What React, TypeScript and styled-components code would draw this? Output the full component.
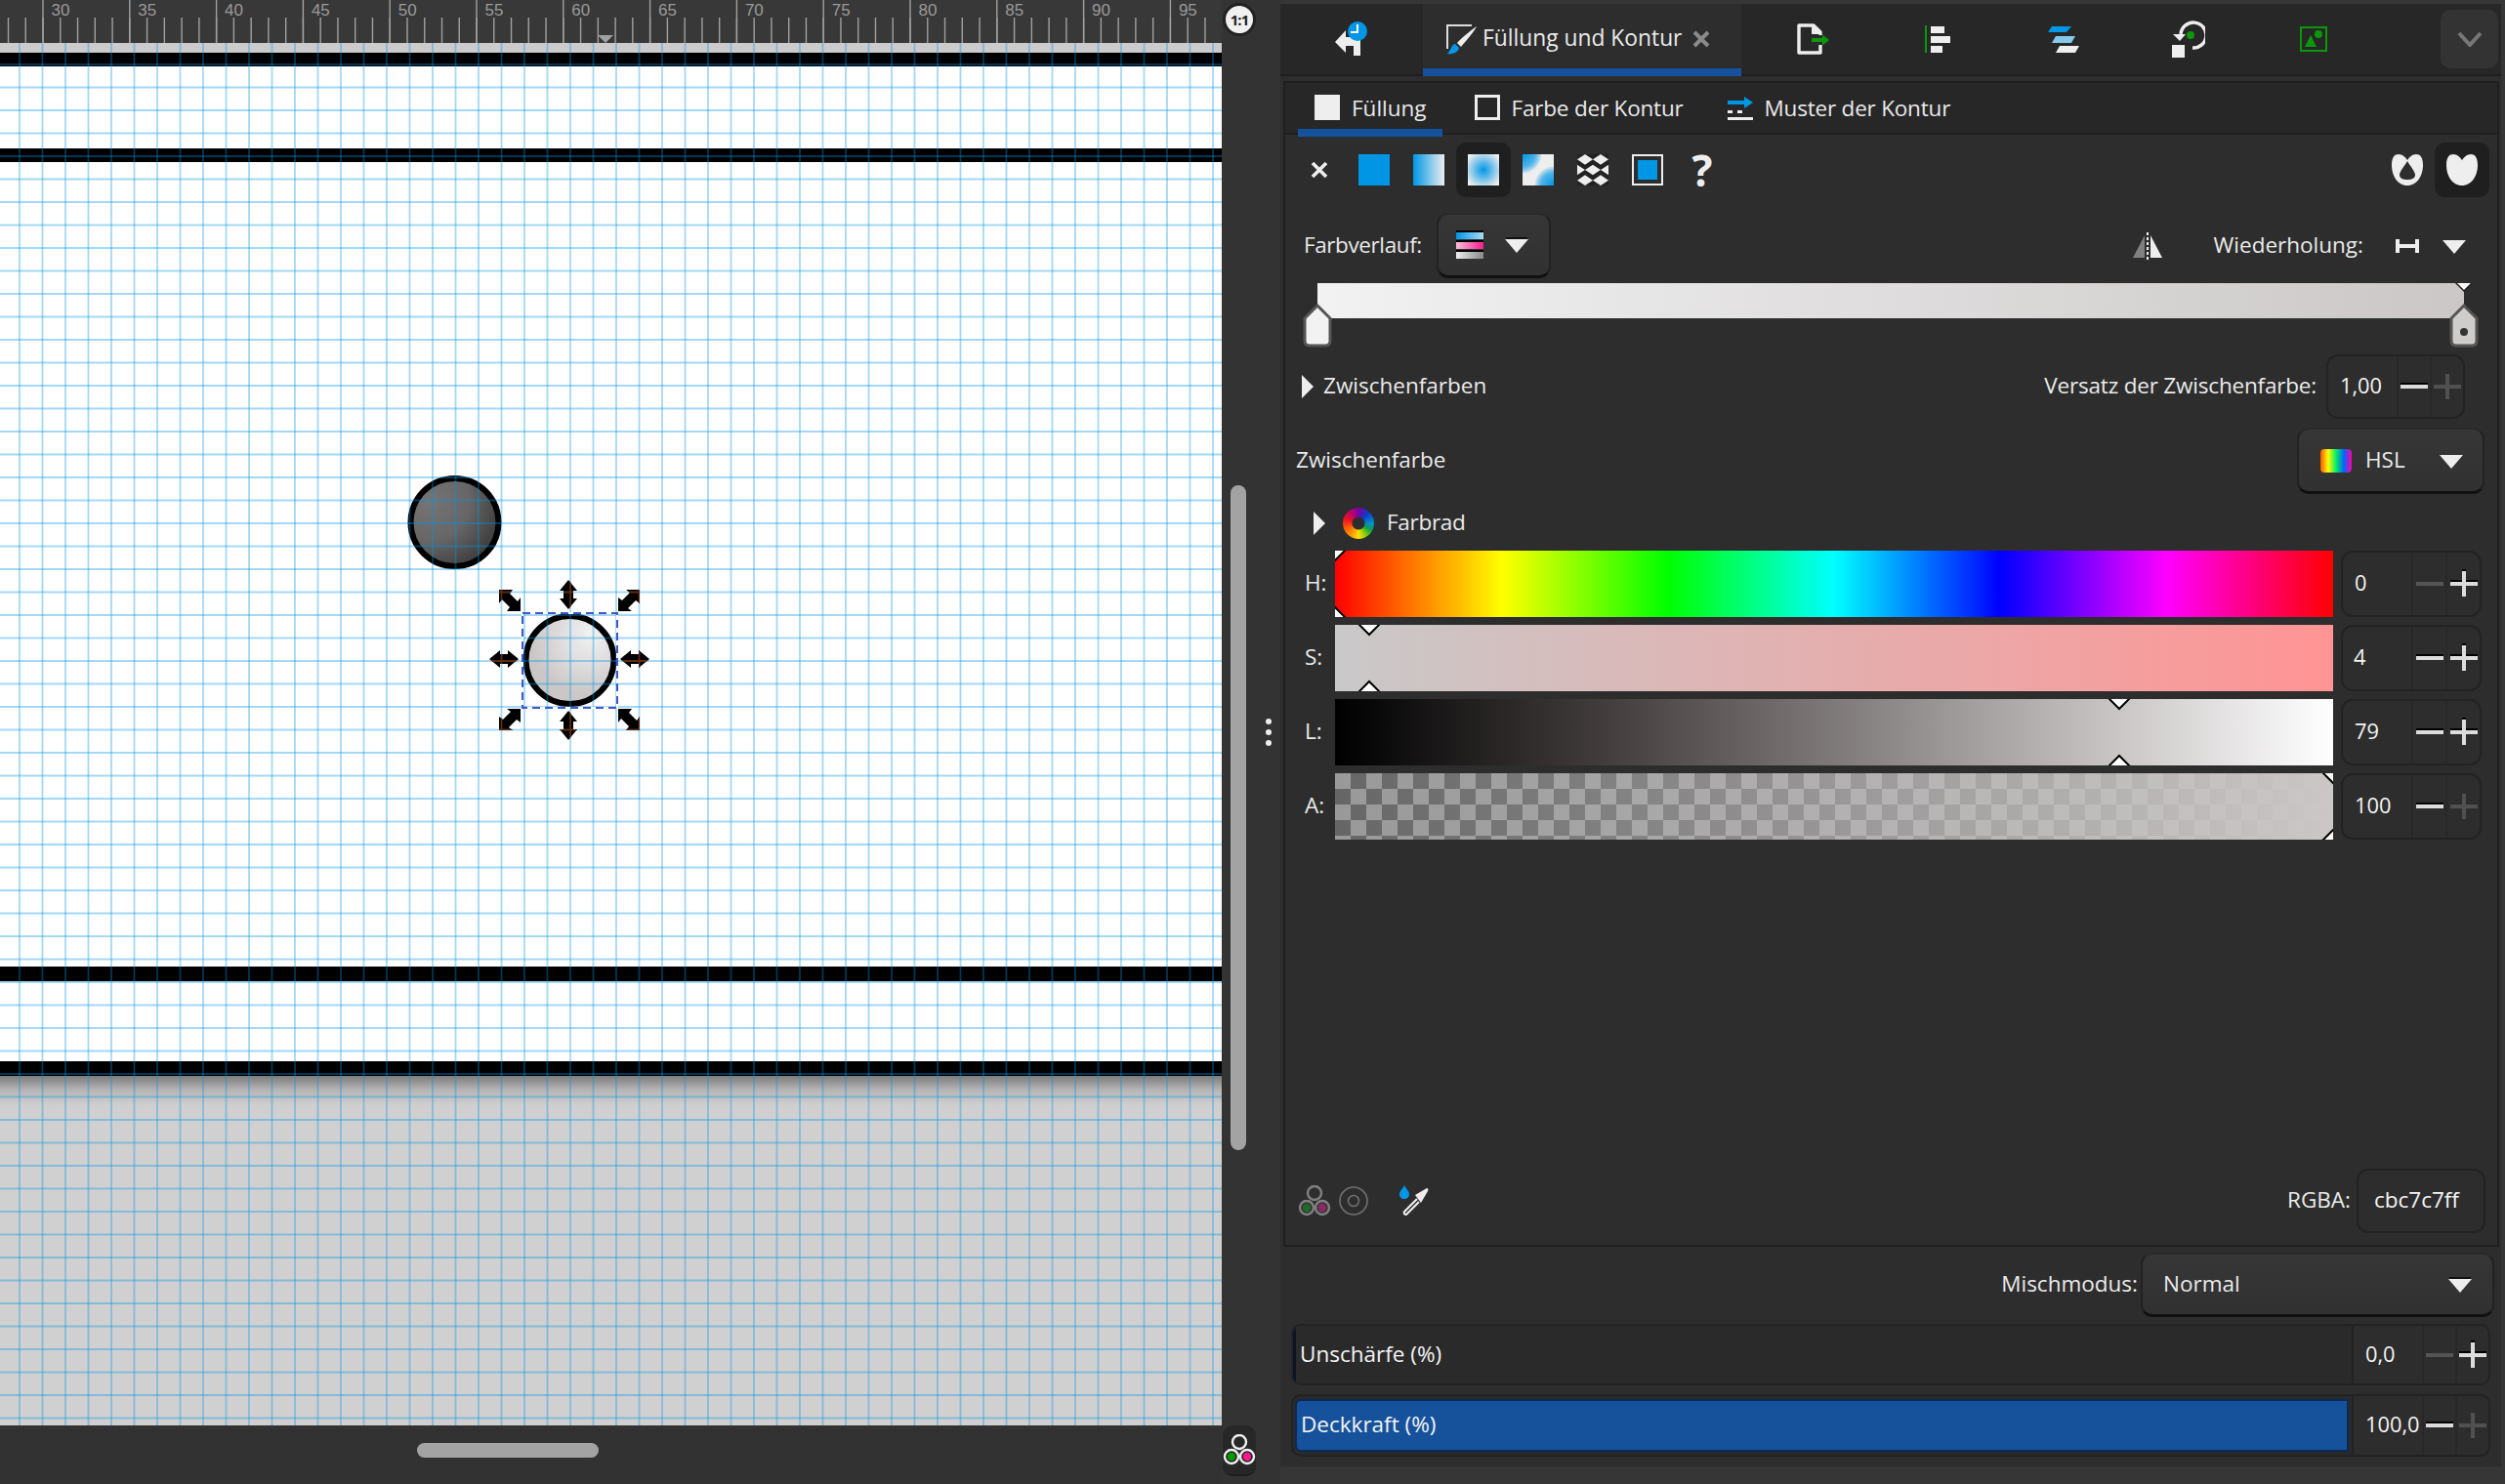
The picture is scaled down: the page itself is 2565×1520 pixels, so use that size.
import React from "react";
import styled, { createGlobalStyle } from "styled-components";

const Global = createGlobalStyle`
  html, body { margin: 0; padding: 0; background: #333; overflow: hidden; }
  * { box-sizing: border-box; }
  #root { width: 2565px; height: 1520px; }
`;

const Shell = styled.div`
  width: 2565px; height: 1520px; display: grid; grid-template-columns: 1251px 60px 1fr;
  font-family: "Open Sans", "Noto Sans", sans-serif; font-size: 22.5px; color: #eaeaea; overflow: hidden;
`;
const Txt = styled.span`padding-bottom: 3px; white-space: nowrap;`;
const CanvasColumn = styled.div`display: flex; flex-direction: column; height: 1520px;`;
const RulerBar = styled.svg`display: block; width: 1251px; height: 44px; background: #383838; flex: none;`;
const Canvas = styled.div`position: relative; height: 1416px; display: flex; flex-direction: column; background: #fff; overflow: hidden;`;
const Band = styled.div<{ $h: number; $c: string }>`height: ${(p) => p.$h}px; background: ${(p) => p.$c}; flex: none;`;
const Desk = styled.div`
  flex: 1; background: linear-gradient(#7c7c7c 0, #b4b4b4 14px, #cfcfcf 30px, #d0d0d0 40px);
`;
const Overlay = styled.svg`position: absolute; left: 0; top: 0; width: 1251px; height: 1416px;`;
const HBar = styled.div`flex: 1; background: #323232; padding: 18px 0 0 427px;`;
const HThumb = styled.div`width: 186px; height: 15px; border-radius: 8px; background: #a3a3a3;`;

const Gutter = styled.div`display: grid; grid-template-columns: 36px 24px; background: #333;`;
const ScrollCol = styled.div`display: flex; flex-direction: column; height: 1520px;`;
const ZoomFit = styled.div`
  height: 44px; flex: none; display: flex; align-items: center; justify-content: center;
`;
const ZoomFace = styled.div`
  width: 34px; height: 34px; margin-top: -4px; border-radius: 50%; background: #f0f0f0; color: #222; border: 3px solid #222;
  font-size: 15px; font-weight: 700; display: flex; align-items: center; justify-content: center; letter-spacing: -1px;
`;
const Track = styled.div`flex: 1; padding: 453px 0 0 9px;`;
const VThumb = styled.div`width: 16px; height: 681px; border-radius: 8px; background: #a3a3a3;`;
const CmsButton = styled.div`
  width: 34px; height: 52px; margin: 0 0 8px 1px; background: #272727; border-radius: 10px; display: flex; align-items: center; justify-content: center;
  border-bottom: 2px solid #1d1d1d;
`;
const SplitCol = styled.div`display: flex; flex-direction: column; align-items: center; justify-content: center; gap: 5px; height: 1499px;`;
const Dot = styled.span`width: 6px; height: 6px; border-radius: 50%; background: #eee;`;

const PanelColumn = styled.div`display: flex; flex-direction: column; background: #363636; padding: 4px 4px 18px 0;`;
const Panel = styled.div`flex: 1; background: #2d2d2d; display: flex; flex-direction: column;`;
const TabBar = styled.div`height: 74px; flex: none; display: flex; background: #272727; border-bottom: 2px solid #1f1f1f;`;
const IconTab = styled.div`width: 146px; height: 72px; display: flex; align-items: center; justify-content: center;`;
const SmallTab = styled.div<{ $first?: boolean }>`
  width: 128px; height: 72px; display: flex; align-items: center; justify-content: center; margin-left: ${(p) => (p.$first ? 10 : 0)}px;
`;
const ActiveTab = styled.div`
  width: 326px; height: 74px; display: flex; align-items: center; padding: 6px 0 0 24px; background: #2d2d2d; border-bottom: 8px solid #16529c;
`;
const TabText = styled.span`font-size: 22.8px; white-space: nowrap; margin: 0 11px 0 5px; padding-bottom: 4px;`;
const MoreButton = styled.div`
  margin: 6px 3px 0 auto; width: 59px; height: 60px; border-radius: 10px; background: #333; display: flex; align-items: center; justify-content: center;
`;
const Frame = styled.div`
  height: 1194px; margin: 5px 0 0 3px; width: 1245px; border: 2px solid #1f1f1f; display: flex; flex-direction: column; flex: none;
`;
const SubTabs = styled.div`height: 53px; flex: none; display: flex; align-items: flex-start; padding-left: 13px; gap: 16px; background: #272727; border-bottom: 2px solid #1f1f1f;`;
const SubTab = styled.div<{ $active?: boolean; $pr: number }>`
  height: 55px; display: flex; align-items: center; gap: 12px; padding: 3px ${(p) => p.$pr}px 0 17px; white-space: nowrap; letter-spacing: ${(p) => (p.$active ? 0 : -0.2)}px;
  border-bottom: 8px solid ${(p) => (p.$active ? "#16529c" : "transparent")};
`;
const PaintRow = styled.div`display: flex; padding: 8px 8px 0 7px; height: 64px; flex: none;`;
const PaintButton = styled.div<{ $active?: boolean }>`
  width: 56px; height: 56px; border-radius: 10px; display: flex; align-items: center; justify-content: center; background: ${(p) => (p.$active ? "#1f1f1f" : "transparent")};
`;
const Spacer = styled.div`flex: 1;`;
const Question = styled.span`font-size: 44px; font-weight: 700; line-height: 1; color: #eee;`;
const GradRow = styled.div`display: flex; align-items: center; margin-top: 16px; height: 67px; padding: 0 32px 0 19px; flex: none;`;
const GradLabel = styled(Txt)`width: 136px; letter-spacing: -0.4px;`;
const DropButton = styled.div<{ $w: number; $pad: number; $arrowPad?: number }>`
  width: ${(p) => p.$w}px; height: 66px; padding: 0 ${(p) => p.$arrowPad ?? 21}px 0 ${(p) => p.$pad}px; display: flex; align-items: center; background: linear-gradient(#363636, #313131);
  border: 2px solid #222; border-top-color: #2a2a2a; border-bottom: 3px solid #111; border-radius: 12px; flex: none;
`;
const GradPicker = styled(DropButton)`height: 67px;`;
const HslButton = styled(DropButton)`height: 68px;`;
const ReverseWrap = styled.div`display: flex; margin-right: 52px;`;
const RepeatWrap = styled.div`display: flex; margin-left: 33px; gap: 24px; align-items: center;`;
const BarWrap = styled.div`position: relative; margin: 5px 0 0 33px; width: 1174px; height: 66px; flex: none;`;
const GradBar = styled.div`height: 36px; background: linear-gradient(90deg, #f2f2f2, #cbc7c7);`;
const StopHandle = styled.svg<{ $end?: boolean }>`position: absolute; top: 21px; ${(p) => (p.$end ? "right: -16px;" : "left: -16px;")} width: 32px; height: 45px;`;
const EndMark = styled.svg`position: absolute; top: 0; right: -10px; width: 20px; height: 9px;`;
const StopRow = styled.div`display: flex; align-items: center; margin-top: 7px; height: 66px; padding: 0 33px 0 17px; flex: none;`;
const Expander = styled.svg`flex: none; width: 12px; height: 24px;`;
const ExpanderLabel = styled(Txt)`margin-left: 10px;`;
const HslLabel = styled(Txt)`margin-left: 14px;`;
const OffsetLabel = styled(Txt)`margin-right: 10px; letter-spacing: -0.19px;`;
const ColorHead = styled.div`display: flex; align-items: center; margin-top: 9px; height: 68px; padding: 0 13px 0 11px; flex: none;`;
const WheelRow = styled.div`display: flex; align-items: center; height: 58px; padding: 2px 0 0 29px; flex: none;`;
const WheelLabel = styled(Txt)`letter-spacing: -0.3px;`;
const Wheel = styled.div`
  width: 32px; height: 32px; border-radius: 50%; margin: 0 13px 0 18px;
  background: radial-gradient(circle, #2d2d2d 0 6px, transparent 7px),
    conic-gradient(#7a00a8, #0a3cc8 12%, #0090c8 25%, #12a050 33%, #90d000 42%, #ffe000 50%, #ffa000 58%, #ff6a00 67%, #f01020 80%, #b00070 92%, #7a00a8);
`;
const SliderGrid = styled.div`display: grid; grid-template-columns: 51px 1022px 144px; row-gap: 8px; flex: none;`;
const ChannelLabel = styled.div`height: 68px; display: flex; align-items: center; padding: 0 0 3px 20px;`;
const Slider = styled.div<{ $bg: string }>`position: relative; height: 68px; overflow: hidden; background: ${(p) => p.$bg};`;
const SliderThumbs = styled.svg`position: absolute; top: 0; width: 24px; height: 68px; margin-left: -12px;`;
const SpinSlot = styled.div`margin-left: 8px;`;
const SpinBox = styled.div<{ $w: number; $h: number; $btn: number }>`
  width: ${(p) => p.$w}px; height: ${(p) => p.$h}px; display: grid; grid-template-columns: 1fr ${(p) => p.$btn}px ${(p) => p.$btn}px;
  border: 2px solid #232323; border-radius: 12px; background: #2d2d2d;
`;
const SpinValue = styled.div<{ $pad: number }>`display: flex; align-items: center; padding: 0 0 3px ${(p) => p.$pad}px; color: #f4f4f4; font-size: 21.8px;`;
const SpinBtn = styled.div`display: flex; align-items: center; justify-content: center; border-left: 2px solid #282828;`;
const Footer = styled.div`margin-top: auto; margin-bottom: 12px; height: 66px; display: flex; align-items: center; padding: 0 12px 0 13px; flex: none;`;
const FooterGap = styled.div<{ $w: number }>`width: ${(p) => p.$w}px; flex: none;`;
const HexLabel = styled(Txt)`margin-right: 6px;`;
const HexBox = styled.div`
  width: 132px; height: 66px; display: flex; align-items: center; padding: 0 0 3px 16px; border: 2px solid #232323; border-radius: 12px; color: #f4f4f4; white-space: nowrap;
`;
const MixRow = styled.div`display: flex; justify-content: flex-end; align-items: center; margin: 6px 7px 0 0; height: 66px; flex: none;`;
const MixLabel = styled(Txt)`margin-right: 3px;`;
const MixSelect = styled(DropButton)`justify-content: space-between;`;
const EffectRow = styled.div<{ $h: number; $gap: number }>`
  margin: ${(p) => p.$gap}px 11px 0; height: ${(p) => p.$h}px; display: flex; border: 2px solid #232323; border-radius: 10px; background: #2a2a2a; flex: none; overflow: hidden;
`;
const EffectTrack = styled.div<{ $fill: boolean }>`
  width: ${(p) => (p.$fill ? 1079 : 1084)}px; flex: none; margin: ${(p) => (p.$fill ? "3px 3px 3px 2px" : "0")}; display: flex; align-items: center; color: #f4f4f4;
  padding: 0 0 3px ${(p) => (p.$fill ? 4 : 7)}px; border: ${(p) => (p.$fill ? "2px solid #0b2a56" : "0")}; border-radius: ${(p) => (p.$fill ? "6px 0 0 6px" : "0")};
  background: ${(p) => (p.$fill ? "#16529c" : "linear-gradient(90deg, #0a1626 3px, #2a2a2a 3px)")};
`;
const EffectSpin = styled.div`flex: 1; display: grid; grid-template-columns: 1fr 34px 34px; background: #2d2d2d; border-left: 2px solid #222;`;

const majors = Array.from({ length: 14 }, (_, i) => i);
const minors = Array.from({ length: 70 }, (_, i) => i);

function Ruler() {
  return (
    <RulerBar viewBox="0 0 1251 44">
      {minors.map((i) => {
        const x = 8.5 + i * 17.76;
        return <line key={i} x1={x} x2={x} y1={18} y2={44} stroke="#a0a0a0" strokeWidth={1.4} />;
      })}
      {majors.map((i) => {
        const x = 44 + i * 88.8;
        return (
          <g key={i}>
            <line x1={x} x2={x} y1={0} y2={44} stroke="#a0a0a0" strokeWidth={1.4} />
            <text x={x + 8.5} y={16} fontSize={17} fill="#9a9a9a" fontFamily="Liberation Sans, sans-serif">{30 + i * 5}</text>
          </g>
        );
      })}
      <polygon points="612,36 628,36 620,44" fill="#a0a0a0" />
    </RulerBar>
  );
}

const vLines = Array.from({ length: 53 }, (_, i) => 20 + i * 23.5);
const hLines = Array.from({ length: 60 }, (_, i) => 22 + i * 23.5);

function Grid({ stroke, op }: { stroke: string; op: number }) {
  return (
    <g stroke={stroke} strokeOpacity={op} strokeWidth={1.8}>
      {vLines.map((x) => <line key={x} x1={x} x2={x} y1={0} y2={1416} />)}
      {hLines.map((y) => <line key={y} x1={0} x2={1251} y1={y} y2={y} />)}
    </g>
  );
}

const VA = "M0-15L9-4H5V4H9L0 15-9 4H-5V-4H-9Z";
const HA = "M-15 0L-4-9V-5H4V-9L15 0 4 9V5H-4V9Z";
const DA = "M-11-11H3L0-7 8 1 11-3V11H-3L0 7-8-1-11 3Z";
const handles = [
  { d: VA, t: "translate(582 565)" },
  { d: VA, t: "translate(582 699)" },
  { d: HA, t: "translate(516 631)" },
  { d: HA, t: "translate(650 631)" },
  { d: DA, t: "translate(522 571)" },
  { d: DA, t: "translate(644 571) rotate(90)" },
  { d: DA, t: "translate(522 693) rotate(90)" },
  { d: DA, t: "translate(644 693)" },
];

function CanvasArt() {
  return (
    <Overlay viewBox="0 0 1251 1416">
      <defs>
        <radialGradient id="darkBall" gradientUnits="userSpaceOnUse" cx="440" cy="470" r="90">
          <stop offset="0" stopColor="#757575" />
          <stop offset="0.45" stopColor="#666" />
          <stop offset="1" stopColor="#2c2c2c" />
        </radialGradient>
        <radialGradient id="lightBall" gradientUnits="userSpaceOnUse" cx="605" cy="606" r="62">
          <stop offset="0" stopColor="#f2f2f2" />
          <stop offset="1" stopColor="#cbc7c7" />
        </radialGradient>
        <clipPath id="handleClip">
          {handles.map((h) => <path key={h.t} d={h.d} transform={h.t} />)}
        </clipPath>
      </defs>
      <circle cx="465.5" cy="491" r="45" fill="url(#darkBall)" stroke="#000" strokeWidth="6" />
      <circle cx="583.5" cy="632" r="45" fill="url(#lightBall)" stroke="#000" strokeWidth="6" />
      <Grid stroke="#0096e6" op={0.36} />
      <rect x="535" y="584" width="97" height="97" fill="none" stroke="#fff" strokeWidth="2" />
      <rect x="535" y="584" width="97" height="97" fill="none" stroke="#4456cc" strokeWidth="2" strokeDasharray="8 5" />
      {handles.map((h) => <path key={h.t} d={h.d} transform={h.t} fill="#000" />)}
      <g clipPath="url(#handleClip)"><Grid stroke="#5e2a12" op={1} /></g>
    </Overlay>
  );
}

function Down({ edge = true }: { edge?: boolean }) {
  return (
    <svg width="24" height="16" viewBox="0 0 24 16">
      {edge && <rect x="1" y="0" width="22" height="2" fill="#111" />}
      <polygon points="0,2 24,2 12,16" fill="#eee" />
    </svg>
  );
}
function Right() {
  return (
    <Expander viewBox="0 0 12 24">
      <polygon points="0,0 12,12 0,24" fill="#eee" />
    </Expander>
  );
}
function Minus({ dim }: { dim?: boolean }) {
  return (
    <svg width="28" height="28" viewBox="0 0 28 28">
      {!dim && <rect x="0" y="10" width="28" height="2" fill="#000" />}
      <rect x="0" y="12" width="28" height="4" fill={dim ? "#555" : "#dcdcdc"} />
    </svg>
  );
}
function Plus({ dim }: { dim?: boolean }) {
  return (
    <svg width="28" height="30" viewBox="0 0 28 30">
      {!dim && <><rect x="12" y="0" width="4" height="2" fill="#000" /><rect x="0" y="11" width="28" height="2" fill="#000" /></>}
      <path d="M12 2h4v11h12v4H16v11h-4V17H0v-4h12z" fill={dim ? "#505050" : "#dcdcdc"} />
    </svg>
  );
}
function Spin({ v, pad, w, h, btn, dimMinus, dimPlus }: { v: string; pad: number; w: number; h: number; btn: number; dimMinus?: boolean; dimPlus?: boolean }) {
  return (
    <SpinBox $w={w} $h={h} $btn={btn}>
      <SpinValue $pad={pad}>{v}</SpinValue>
      <SpinBtn><Minus dim={dimMinus} /></SpinBtn>
      <SpinBtn><Plus dim={dimPlus} /></SpinBtn>
    </SpinBox>
  );
}

function Cms({ dim }: { dim?: boolean }) {
  const s = dim ? "#808080" : "#eee";
  return (
    <svg width="34" height="32" viewBox="0 0 34 32">
      <circle cx="17" cy="8" r="7" fill="none" stroke={s} strokeWidth="2.4" />
      <circle cx="9" cy="23" r="7" fill={dim ? "#333" : "#222"} stroke={s} strokeWidth="2.4" />
      <circle cx="25" cy="23" r="7" fill={dim ? "#333" : "#222"} stroke={s} strokeWidth="2.4" />
      <circle cx="9" cy="23" r="4.2" fill={dim ? "#1f6a2a" : "#009a00"} />
      <circle cx="25" cy="23" r="4.2" fill={dim ? "#8a2a64" : "#ff1a90"} />
    </svg>
  );
}

function HistoryIcon() {
  return (
    <svg width="34" height="38" viewBox="0 0 34 38">
      <path d="M0 22L11 10V17H26V36H19V26H11V33Z" fill="#eee" />
      <circle cx="23" cy="11" r="10" fill="#0096e6" />
      <path d="M23 4v8h-7" fill="none" stroke="#fff" strokeWidth="2" />
    </svg>
  );
}
function BrushIcon() {
  return (
    <svg width="32" height="32" viewBox="0 0 32 32">
      <path d="M1 26V2H26" fill="none" stroke="#ddd" strokeWidth="2" />
      <path d="M31 3C27 6 16 14 11 20l4 4C20 18 28 9 31 3Z" fill="#eee" />
      <path d="M9 21c-4 1-4 5-5 6-1 2-3 3-3 4 5 1 11-1 12-6z" fill="#0096e6" />
    </svg>
  );
}
function ExportIcon() {
  return (
    <svg width="34" height="32" viewBox="0 0 34 32">
      <path d="M2 2H17L24 9V30H2Z" fill="none" stroke="#eee" strokeWidth="3.4" strokeLinejoin="round" />
      <path d="M16 2V10H24" fill="#eee" stroke="#eee" strokeWidth="2" />
      <rect x="14" y="12" width="20" height="10" fill="#2a2a2a" />
      <path d="M15 15H26V11.5L33 17 26 22.5V19H15Z" fill="#0a980a" />
    </svg>
  );
}
function AlignIcon() {
  return (
    <svg width="28" height="28" viewBox="0 0 28 28">
      <rect x="0" y="0" width="2" height="28" fill="#0a980a" />
      <rect x="6" y="1" width="14" height="7" fill="#eee" />
      <rect x="6" y="11" width="20" height="7" fill="#eee" />
      <rect x="6" y="21" width="12" height="7" fill="#eee" />
    </svg>
  );
}
function LayersIcon() {
  return (
    <svg width="32" height="28" viewBox="0 0 32 28">
      <polygon points="4,1 24,1 19,7 0,7" fill="#0096e6" />
      <polygon points="8,11 28,11 24,18 4,18" fill="#84c8ec" />
      <polygon points="12,21 32,21 28,28 8,28" fill="#eee" />
    </svg>
  );
}
function TransformIcon() {
  return (
    <svg width="34" height="38" viewBox="0 0 34 38">
      <path d="M9 14A13 13 0 1 1 21 28" fill="none" stroke="#eee" strokeWidth="3.4" />
      <polygon points="1,14 14,14 8,21" fill="#eee" />
      <circle cx="19" cy="15" r="4" fill="#0a980a" />
      <rect x="0" y="25" width="13" height="13" fill="#eee" />
    </svg>
  );
}
function ImageIcon() {
  return (
    <svg width="28" height="26" viewBox="0 0 28 26">
      <rect x="1" y="1" width="26" height="24" fill="none" stroke="#0a980a" strokeWidth="2" />
      <polygon points="5,21 17,21 11,9" fill="#0a980a" />
      <circle cx="19" cy="8" r="4" fill="#0a980a" />
    </svg>
  );
}
function Flat() {
  return <svg width="32" height="32"><rect width="32" height="32" fill="#0096e6" /></svg>;
}
function Linear() {
  return (
    <svg width="32" height="32">
      <defs><linearGradient id="pl"><stop offset="0" stopColor="#0096e6" /><stop offset="1" stopColor="#eee" /></linearGradient></defs>
      <rect width="32" height="32" fill="url(#pl)" />
    </svg>
  );
}
function Radial() {
  return (
    <svg width="32" height="32">
      <defs><radialGradient id="pr" r="0.62"><stop offset="0" stopColor="#0096e6" /><stop offset="1" stopColor="#eee" /></radialGradient></defs>
      <rect width="32" height="32" fill="url(#pr)" />
    </svg>
  );
}
function Mesh() {
  return (
    <svg width="32" height="32">
      <defs>
        <radialGradient id="pm1" gradientUnits="userSpaceOnUse" cx="0" cy="0" r="20"><stop offset="0" stopColor="#0096e6" /><stop offset="0.6" stopColor="#0096e6" stopOpacity="0.7" /><stop offset="1" stopColor="#eee" /></radialGradient>
        <radialGradient id="pm2" gradientUnits="userSpaceOnUse" cx="32" cy="32" r="20"><stop offset="0" stopColor="#0096e6" /><stop offset="0.6" stopColor="#0096e6" stopOpacity="0.7" /><stop offset="1" stopColor="#eee" /></radialGradient>
      </defs>
      <rect width="32" height="32" fill="#eee" />
      <path d="M0 0H20A20 20 0 0 1 0 20Z" fill="url(#pm1)" />
      <path d="M32 32H12A20 20 0 0 1 32 12Z" fill="url(#pm2)" />
    </svg>
  );
}
const diamonds: [number, number][] = [[8, 5.33], [24, 5.33], [0, 16], [16, 16], [32, 16], [8, 26.67], [24, 26.67]];
function Pattern() {
  return (
    <svg width="32" height="32" viewBox="0 0 32 32">
      <rect width="32" height="32" fill="#222" />
      {diamonds.map(([x, y]) => (
        <polygon key={`${x}-${y}`} points={`${x - 8},${y} ${x},${y - 5.33} ${x + 8},${y} ${x},${y + 5.33}`} fill="#eee" />
      ))}
    </svg>
  );
}
function Swatch() {
  return (
    <svg width="32" height="32">
      <rect x="1" y="1" width="30" height="30" fill="none" stroke="#eee" strokeWidth="2" />
      <rect x="6" y="6" width="20" height="20" fill="#0096e6" />
    </svg>
  );
}
const HEART = "M16 32C6 32 0 22 0 11 0 3 3 0 7 0 11 0 14 3 16 6 18 3 21 0 25 0 29 0 32 3 32 11 32 22 26 32 16 32Z";
function EvenOdd() {
  return (
    <svg width="32" height="32" viewBox="0 0 32 32">
      <path fillRule="evenodd" d={HEART + "M16 7C13 12 8 18 8 21 8 25 12 26 16 26 20 26 24 25 24 21 24 18 19 12 16 7Z"} fill="#eee" />
    </svg>
  );
}
function NonZero() {
  return <svg width="32" height="32" viewBox="0 0 32 32"><path d={HEART} fill="#eee" /></svg>;
}
function ReverseIcon() {
  return (
    <svg width="32" height="28" viewBox="0 0 32 28">
      <polygon points="13,3 13,26 1,26" fill="#808080" />
      <polygon points="19,3 19,26 31,26" fill="#eee" />
      <line x1="16" x2="16" y1="0" y2="28" stroke="#eee" strokeWidth="2" strokeDasharray="3 2" />
    </svg>
  );
}
function RepeatIcon() {
  return (
    <svg width="24" height="14" viewBox="0 0 24 14">
      <rect width="4" height="14" fill="#eee" /><rect x="20" width="4" height="14" fill="#eee" /><rect y="5" width="24" height="4" fill="#eee" />
    </svg>
  );
}
function GradStack() {
  return (
    <svg width="28" height="30" viewBox="0 0 28 30">
      <defs>
        <linearGradient id="g1"><stop offset="0" stopColor="#0096e6" /><stop offset="1" stopColor="#a8dcf5" /></linearGradient>
        <linearGradient id="g2"><stop offset="0" stopColor="#f5c0dc" /><stop offset="1" stopColor="#ff1a90" /></linearGradient>
        <linearGradient id="g3"><stop offset="0" stopColor="#eee" /><stop offset="1" stopColor="#888" /></linearGradient>
      </defs>
      <rect y="0" width="28" height="2" fill="#000" /><rect y="2" width="28" height="7" fill="url(#g1)" />
      <rect y="10" width="28" height="2" fill="#000" /><rect y="12" width="28" height="7" fill="url(#g2)" />
      <rect y="20" width="28" height="2" fill="#000" /><rect y="22" width="28" height="7" fill="url(#g3)" />
    </svg>
  );
}
function Handle({ dot }: { dot?: boolean }) {
  return (
    <>
      <path d="M16 2L29 15V38Q29 43 24 43H8Q3 43 3 38V15Z" fill={dot ? "#cfcccc" : "#f2f2f2"} stroke="#555" strokeWidth="3" />
      {dot && <circle cx="16" cy="29" r="4" fill="#333" />}
    </>
  );
}
function Dropper() {
  return (
    <svg width="32" height="32" viewBox="0 0 32 32">
      <path d="M6 0C8 4 11 6 11 9 11 12 9 14 6 14 3 14 1 12 1 9 1 6 4 4 6 0Z" fill="#0096e6" />
      <path d="M19 14L6 27Q5 30 8 30L21 17" fill="none" stroke="#eee" strokeWidth="2.2" />
      <path d="M17 10L29 3Q31 3 30 6L23 18Z" fill="#eee" />
    </svg>
  );
}
function TargetDim() {
  return (
    <svg width="30" height="30" viewBox="0 0 30 30">
      <circle cx="15" cy="15" r="14" fill="none" stroke="#707070" strokeWidth="1.6" />
      <circle cx="15" cy="15" r="5.5" fill="none" stroke="#707070" strokeWidth="1.6" />
    </svg>
  );
}
const checker = "repeating-conic-gradient(#666 0 25%, #999 0 50%) 0 0 / 32px 32px";

function Thumbs({ x }: { x: number }) {
  return (
    <SliderThumbs viewBox="0 0 24 68" style={{ left: x }}>
      <polygon points="1,-1 23,-1 12,10" fill="#fff" stroke="#000" strokeWidth="2" />
      <polygon points="1,69 23,69 12,58" fill="#fff" stroke="#000" strokeWidth="2" />
    </SliderThumbs>
  );
}

const channels = [
  { l: "H:", v: "0", pad: 12, bg: "linear-gradient(90deg,#f00,#ff0 16.66%,#0f0 33.33%,#0ff 50%,#00f 66.66%,#f0f 83.33%,#f00)", x: 0, dimMinus: true },
  { l: "S:", v: "4", pad: 11, bg: "linear-gradient(90deg,#c9c9c9,#ff9494)", x: 35 },
  { l: "L:", v: "79", pad: 12, bg: "linear-gradient(90deg,#000,#4a4444 30%,#cbc7c7 79%,#fff)", x: 803 },
  { l: "A:", v: "100", pad: 12, bg: `linear-gradient(90deg,rgba(203,199,199,0),#cbc7c7), ${checker}`, x: 1022, dimPlus: true },
];

export default function App() {
  return (
    <Shell>
      <Global />
      <CanvasColumn>
        <Ruler />
        <Canvas>
          <Band $h={10} $c="#cbcbcb" />
          <Band $h={14} $c="#000" />
          <Band $h={84} $c="#fff" />
          <Band $h={14} $c="#000" />
          <Band $h={824} $c="#fff" />
          <Band $h={15} $c="#000" />
          <Band $h={82} $c="#fff" />
          <Band $h={15} $c="#000" />
          <Desk />
          <CanvasArt />
        </Canvas>
        <HBar><HThumb /></HBar>
      </CanvasColumn>

      <Gutter>
        <ScrollCol>
          <ZoomFit><ZoomFace>1:1</ZoomFace></ZoomFit>
          <Track><VThumb /></Track>
          <CmsButton><Cms /></CmsButton>
        </ScrollCol>
        <SplitCol><Dot /><Dot /><Dot /></SplitCol>
      </Gutter>

      <PanelColumn>
        <Panel>
          <TabBar>
            <IconTab><HistoryIcon /></IconTab>
            <ActiveTab>
              <BrushIcon />
              <TabText>Füllung und Kontur</TabText>
              <svg width="18" height="18" viewBox="0 0 18 18"><path d="M2 2L16 16M16 2L2 16" stroke="#8a8a8a" strokeWidth="4" /></svg>
            </ActiveTab>
            <SmallTab $first><ExportIcon /></SmallTab>
            <SmallTab><AlignIcon /></SmallTab>
            <SmallTab><LayersIcon /></SmallTab>
            <SmallTab><TransformIcon /></SmallTab>
            <SmallTab><ImageIcon /></SmallTab>
            <MoreButton>
              <svg width="26" height="16" viewBox="0 0 26 16"><path d="M2 2L13 14 24 2" fill="none" stroke="#777" strokeWidth="4" /></svg>
            </MoreButton>
          </TabBar>
          <Frame>
            <SubTabs>
              <SubTab $active $pr={16}>
                <svg width="26" height="26"><rect width="26" height="26" fill="#eee" /></svg>
                Füllung
              </SubTab>
              <SubTab $pr={12}>
                <svg width="26" height="26"><rect x="1.5" y="1.5" width="23" height="23" fill="none" stroke="#eee" strokeWidth="3" /></svg>
                Farbe der Kontur
              </SubTab>
              <SubTab $pr={10}>
                <svg width="26" height="26" viewBox="0 0 26 26">
                  <path d="M0 6H17V2L26 8 17 14V10H0Z" fill="#0096e6" />
                  <rect y="16" width="5" height="3" fill="#eee" /><rect x="10" y="16" width="5" height="3" fill="#eee" /><rect y="23" width="26" height="3" fill="#eee" />
                </svg>
                Muster der Kontur
              </SubTab>
            </SubTabs>

            <PaintRow>
              <PaintButton><svg width="18" height="18" viewBox="0 0 18 18"><path d="M2 2L16 16M16 2L2 16" stroke="#eee" strokeWidth="3.6" /></svg></PaintButton>
              <PaintButton><Flat /></PaintButton>
              <PaintButton><Linear /></PaintButton>
              <PaintButton $active><Radial /></PaintButton>
              <PaintButton><Mesh /></PaintButton>
              <PaintButton><Pattern /></PaintButton>
              <PaintButton><Swatch /></PaintButton>
              <PaintButton><Question>?</Question></PaintButton>
              <Spacer />
              <PaintButton><EvenOdd /></PaintButton>
              <PaintButton $active><NonZero /></PaintButton>
            </PaintRow>

            <GradRow>
              <GradLabel>Farbverlauf:</GradLabel>
              <GradPicker $w={117} $pad={18}>
                <GradStack />
                <Spacer />
                <Down />
              </GradPicker>
              <Spacer />
              <ReverseWrap><ReverseIcon /></ReverseWrap>
              <Txt>Wiederholung:</Txt>
              <RepeatWrap><RepeatIcon /><Down edge={false} /></RepeatWrap>
            </GradRow>

            <BarWrap>
              <GradBar />
              <EndMark viewBox="0 0 20 9"><polygon points="1,-1 19,-1 10,8" fill="#fff" stroke="#222" strokeWidth="1.5" /></EndMark>
              <StopHandle viewBox="0 0 32 45"><Handle /></StopHandle>
              <StopHandle $end viewBox="0 0 32 45"><Handle dot /></StopHandle>
            </BarWrap>

            <StopRow>
              <Right />
              <ExpanderLabel>Zwischenfarben</ExpanderLabel>
              <Spacer />
              <OffsetLabel>Versatz der Zwischenfarbe:</OffsetLabel>
              <Spin v="1,00" pad={12} w={142} h={66} btn={34} dimPlus />
            </StopRow>

            <ColorHead>
              <Txt>Zwischenfarbe</Txt>
              <Spacer />
              <HslButton $w={192} $pad={22} $arrowPad={20}>
                <svg width="32" height="24" viewBox="0 0 32 24">
                  <defs><linearGradient id="hsl"><stop offset="0" stopColor="#f50" /><stop offset="0.25" stopColor="#ff0" /><stop offset="0.5" stopColor="#0e6" /><stop offset="0.75" stopColor="#06f" /><stop offset="1" stopColor="#f0a" /></linearGradient></defs>
                  <rect width="32" height="24" rx="4" fill="url(#hsl)" />
                </svg>
                <HslLabel>HSL</HslLabel>
                <Spacer />
                <Down edge={false} />
              </HslButton>
            </ColorHead>

            <WheelRow>
              <Right />
              <Wheel />
              <WheelLabel>Farbrad</WheelLabel>
            </WheelRow>

            <SliderGrid>
              {channels.map((c) => (
                <React.Fragment key={c.l}>
                  <ChannelLabel>{c.l}</ChannelLabel>
                  <Slider $bg={c.bg}><Thumbs x={c.x} /></Slider>
                  <SpinSlot><Spin v={c.v} pad={c.pad} w={144} h={68} btn={35} dimMinus={c.dimMinus} dimPlus={c.dimPlus} /></SpinSlot>
                </React.Fragment>
              ))}
            </SliderGrid>

            <Footer>
              <Cms dim />
              <FooterGap $w={8} />
              <TargetDim />
              <FooterGap $w={31} />
              <Dropper />
              <Spacer />
              <HexLabel>RGBA:</HexLabel>
              <HexBox>cbc7c7ff</HexBox>
            </Footer>
          </Frame>

          <MixRow>
            <MixLabel>Mischmodus:</MixLabel>
            <MixSelect $w={362} $pad={21}>
              <Txt>Normal</Txt>
              <Down />
            </MixSelect>
          </MixRow>
          <EffectRow $h={63} $gap={7}>
            <EffectTrack $fill={false}>Unschärfe (%)</EffectTrack>
            <EffectSpin>
              <SpinValue $pad={12}>0,0</SpinValue>
              <SpinBtn><Minus dim /></SpinBtn>
              <SpinBtn><Plus /></SpinBtn>
            </EffectSpin>
          </EffectRow>
          <EffectRow $h={64} $gap={9}>
            <EffectTrack $fill>Deckkraft (%)</EffectTrack>
            <EffectSpin>
              <SpinValue $pad={12}>100,0</SpinValue>
              <SpinBtn><Minus /></SpinBtn>
              <SpinBtn><Plus dim /></SpinBtn>
            </EffectSpin>
          </EffectRow>
        </Panel>
      </PanelColumn>
    </Shell>
  );
}
